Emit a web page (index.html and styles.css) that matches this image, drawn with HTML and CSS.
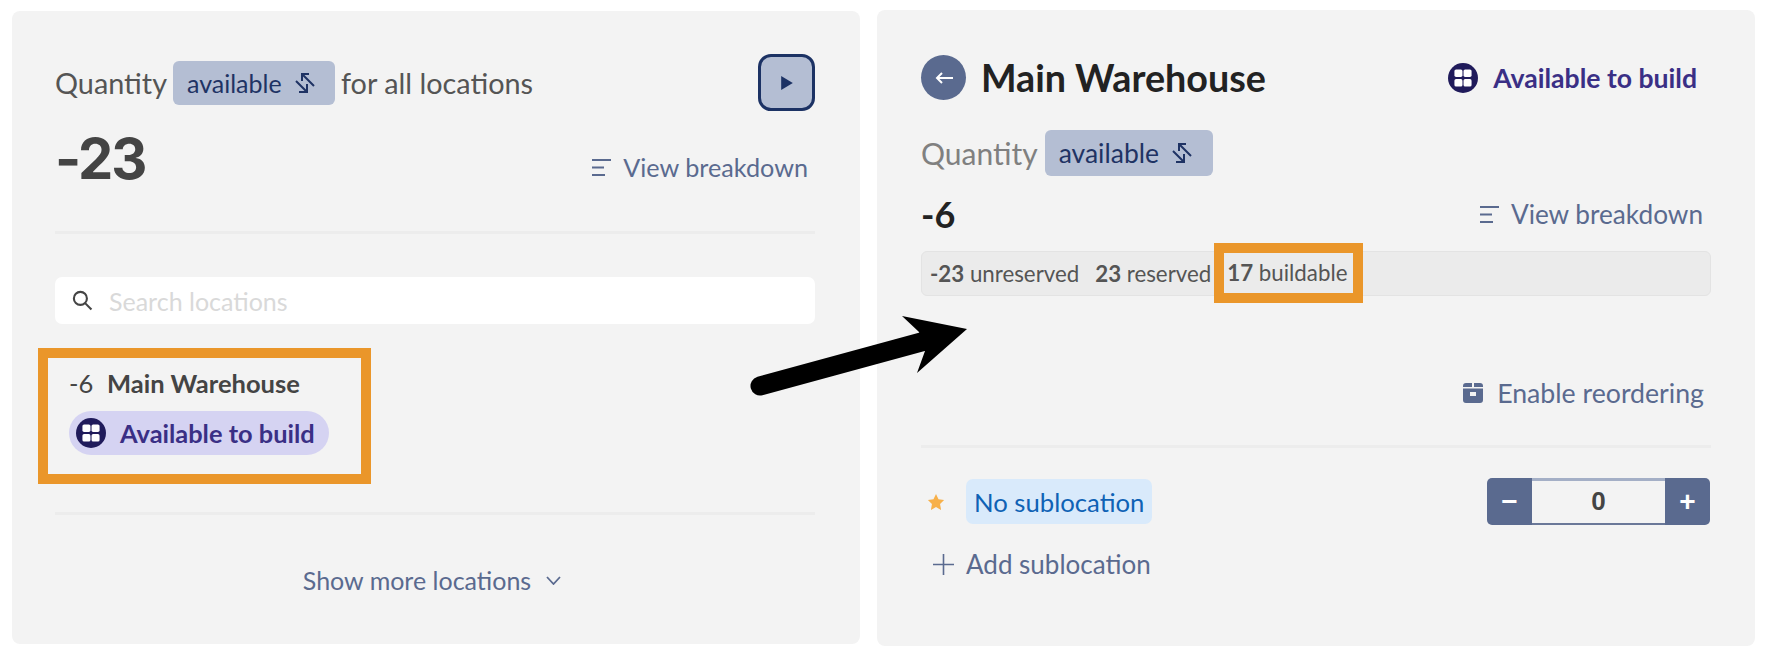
FILE: index.html
```html
<html><head>
  <title>Main Warehouse</title>
  <link rel="stylesheet" href="styles.css">
</head>
<body>
  <main class="page">
    <section class="panel panel-left">
      <div class="qty-head">
        <div class="qty-label">
          <span>Quantity</span>
          <span class="chip">available
            <svg class="swap" viewBox="0 0 22 20"><path d="M15 1 H8 V8 M8 1 L20 13 M5 19 H13 V11 M13 19 L2 8"/></svg>
          </span>
          <span>for all locations</span>
        </div>
        <button class="play"><svg viewBox="0 0 12 14"><path d="M1 1 L11 7 L1 13 Z"/></svg></button>
      </div>
      <div class="total-row">
        <div class="total">-23</div>
        <a class="link link-total"><svg class="bars" viewBox="0 0 19 17"><path d="M0 1 H19 M0 8.500 H12 M0 16 H13"/></svg>View breakdown</a>
      </div>
      <hr class="rule rule-first">
      <div class="search">
        <svg viewBox="0 0 20 20"><circle cx="8" cy="8" r="6.200"/><path d="M12.500 12.500 L18.500 18.500"/></svg>
        <span>Search locations</span>
      </div>
      <div class="location-box">
        <div class="location-name"><span class="location-qty">-6</span><b>Main Warehouse</b></div>
        <div class="pill">
          <svg class="build" viewBox="0 0 28 28"><circle cx="14" cy="14" r="14"/><rect x="6" y="6" width="7.500" height="7" rx="1.500"/><rect x="14.500" y="6" width="7.500" height="7" rx="1.500"/><rect x="6" y="15" width="7.500" height="7" rx="1.500"/><rect x="14.500" y="15" width="7.500" height="7" rx="1.500"/></svg>
          Available to build
        </div>
      </div>
      <hr class="rule rule-second">
      <a class="more">Show more locations
        <svg viewBox="0 0 15 9"><path d="M1 1 L7.500 8 L14 1"/></svg>
      </a>
    </section>

    <section class="panel panel-right">
      <div class="title-row">
        <div class="title">
          <span class="back"><svg viewBox="0 0 18 14"><path d="M18 7 H2 M7 2 L2 7 L7 12"/></svg></span>
          <h1>Main Warehouse</h1>
        </div>
        <div class="build-label">
          <svg class="build" viewBox="0 0 28 28"><circle cx="14" cy="14" r="14"/><rect x="6" y="6" width="7.500" height="7" rx="1.500"/><rect x="14.500" y="6" width="7.500" height="7" rx="1.500"/><rect x="6" y="15" width="7.500" height="7" rx="1.500"/><rect x="14.500" y="15" width="7.500" height="7" rx="1.500"/></svg>
          Available to build
        </div>
      </div>
      <div class="qty-label qty-label-muted">
        <span>Quantity</span>
        <span class="chip">available
          <svg class="swap" viewBox="0 0 22 20"><path d="M15 1 H8 V8 M8 1 L20 13 M5 19 H13 V11 M13 19 L2 8"/></svg>
        </span>
      </div>
      <div class="total-row total-row-small">
        <div class="total-small">-6</div>
        <a class="link"><svg class="bars" viewBox="0 0 19 17"><path d="M0 1 H19 M0 8.500 H12 M0 16 H13"/></svg>View breakdown</a>
      </div>
      <div class="breakdown">
        <span class="stat"><b>-23</b> unreserved</span>
        <span class="stat"><b>23</b> reserved</span>
        <span class="stat stat-hl"><span><b>17</b> buildable</span></span>
      </div>
      <div class="reorder-row">
        <a class="link link-reorder"><svg class="box" viewBox="0 0 20 20"><path d="M3 0 H9 V4 H0 V3 Q0 0 3 0 Z M11 0 H17 Q20 0 20 3 V4 H11 Z"/><path fill-rule="evenodd" d="M0 5.500 H20 V17 Q20 20 17 20 H3 Q0 20 0 17 Z M7 9 V13 H13 V9 Z"/></svg>Enable reordering</a>
      </div>
      <hr class="rule">
      <div class="sub-row">
        <div class="sub-name">
          <svg class="star" viewBox="0 0 20 20"><path d="M10 1 L12.800 7 L19 7.800 L14.500 12.200 L15.700 19 L10 15.600 L4.300 19 L5.500 12.200 L1 7.800 L7.200 7 Z"/></svg>
          <span class="sub-chip">No sublocation</span>
        </div>
        <div class="stepper">
          <span class="step step-minus">−</span>
          <span class="step-value">0</span>
          <span class="step step-plus">+</span>
        </div>
      </div>
      <a class="add-sub"><svg viewBox="0 0 21 21"><path d="M10.500 0 V21 M0 10.500 H21"/></svg>Add sublocation</a>
    </section>

    <svg class="arrow" viewBox="0 0 240 110"><path d="M20 86 L185 41"/><path class="arrow-head" d="M162 16 L227 29 L177 73 L185 51 L179 32 Z"/></svg>
  </main>
</body></html>
```
FILE: styles.css
```css
* {
  box-sizing: border-box;
}

body {
  margin: 0;
  background: #fff;
  font-family: "Lato", "Liberation Sans", sans-serif;
  color: #444;
}

.page {
  position: relative;
  display: flex;
  gap: 17px;
  width: 1772px;
  height: 656px;
  padding: 11px 17px 10px 12px;
}

.panel {
  background: #f3f3f3;
  border-radius: 8px;
}

.panel-left {
  width: 848px;
  height: 633px;
  padding: 43px 45px 0 43px;
}

.panel-right {
  width: 878px;
  height: 636px;
  margin-top: -1px;
  padding: 45px 44px 0 44px;
}

.qty-head {
  display: flex;
  justify-content: space-between;
}

.qty-label {
  display: flex;
  align-items: center;
  gap: 6px;
  height: 44px;
  margin-top: 7px;
  font-size: 28.800px;
  color: #555;
}

.chip {
  display: flex;
  align-items: center;
  gap: 12px;
  width: 162px;
  height: 44px;
  padding: 0 14px;
  background: #b4bed3;
  border-radius: 6px;
  color: #1f3364;
  font-size: 25px;
}

.swap {
  width: 22px;
  height: 20px;
  fill: none;
  stroke: #1f3364;
  stroke-width: 2;
}

.play {
  width: 57px;
  height: 57px;
  padding: 0;
  display: flex;
  align-items: center;
  justify-content: center;
  background: #b4bed3;
  border: 3px solid #1c3264;
  border-radius: 13px;
}

.play svg {
  width: 14px;
  height: 18px;
  fill: #1c3264;
}

.total-row {
  display: flex;
  justify-content: space-between;
  align-items: flex-end;
  padding-right: 7px;
  margin-top: 18px;
}

.total {
  font-family: "Inter", "Liberation Sans", sans-serif;
  font-size: 56px;
  font-weight: 700;
  letter-spacing: -2px;
  line-height: 60px;
  color: #444;
}

.link {
  display: flex;
  align-items: center;
  font-size: 26.200px;
  color: #5a6a8f;
  line-height: 30px;
}

.link-total {
  margin-bottom: 7px;
  font-size: 25.200px;
}

.link-reorder {
  font-size: 26.700px;
}

.bars {
  width: 19px;
  height: 17px;
  margin-right: 12px;
  fill: none;
  stroke: #5a6a8f;
  stroke-width: 2;
}

.rule {
  height: 3px;
  margin: 0;
  border: 0;
  background: #ececec;
}

.rule-first {
  margin-top: 42px;
}

.rule-second {
  margin-top: 28px;
}

.search {
  display: flex;
  align-items: center;
  gap: 16px;
  height: 47px;
  margin-top: 43px;
  padding-left: 17px;
  background: #fff;
  border-radius: 7px;
  font-size: 25px;
  color: #d9d9d9;
}

.search svg {
  width: 21px;
  height: 21px;
  fill: none;
  stroke: #444;
  stroke-width: 2;
}

.location-box {
  width: 333px;
  height: 136px;
  margin: 24px 0 0 -17px;
  padding: 10px 0 0 21px;
  border: 10px solid #ea962a;
}

.location-name {
  display: flex;
  gap: 15px;
  font-size: 25.500px;
  line-height: 30px;
  color: #444;
}

.location-qty {
  width: 23px;
}

.location-name b {
  font-weight: 700;
}

.pill {
  display: flex;
  align-items: center;
  gap: 14px;
  width: 260px;
  height: 44px;
  margin-top: 13px;
  padding-left: 7px;
  background: #d5d3f2;
  border-radius: 22px;
  font-size: 25.400px;
  font-weight: 700;
  color: #3a2f85;
}

.build {
  flex: none;
  width: 30px;
  height: 30px;
  fill: #201b5b;
}

.build rect {
  fill: #fff;
}

.more {
  display: flex;
  justify-content: center;
  align-items: center;
  gap: 15px;
  margin-top: 50px;
  padding-right: 6px;
  font-size: 25px;
  line-height: 30px;
  color: #5a6a8f;
}

.more svg {
  width: 15px;
  height: 9px;
  fill: none;
  stroke: #5a6a8f;
  stroke-width: 1.800;
}

.title-row {
  display: flex;
  justify-content: space-between;
  align-items: center;
  padding-right: 14px;
}

.title {
  display: flex;
  align-items: center;
  gap: 15px;
}

.back {
  display: flex;
  align-items: center;
  justify-content: center;
  width: 45px;
  height: 45px;
  border-radius: 50%;
  background: #5a6a8f;
}

.back svg {
  width: 18px;
  height: 14px;
  fill: none;
  stroke: #fff;
  stroke-width: 2;
}

h1 {
  margin: 0;
  font-size: 37.700px;
  font-weight: 700;
  color: #222;
}

.build-label {
  display: flex;
  align-items: center;
  gap: 15px;
  font-size: 26.600px;
  font-weight: 700;
  color: #3a2f85;
}

.qty-label-muted {
  gap: 7px;
  height: 46px;
  margin-top: 30px;
  font-size: 30px;
  color: #808080;
}

.qty-label-muted .chip {
  width: 168px;
  height: 46px;
  font-size: 26.500px;
}

.total-row-small {
  align-items: center;
  margin-top: 16px;
  padding-right: 8px;
}

.total-small {
  font-size: 36px;
  font-weight: 700;
  line-height: 44px;
  color: #222;
}

.breakdown {
  display: flex;
  align-items: center;
  gap: 16px;
  height: 45px;
  margin-top: 15px;
  padding-left: 8px;
  background: #ebebeb;
  border: 1px solid #e3e3e3;
  border-radius: 6px;
  font-size: 22.300px;
  color: #555;
}

.stat-hl {
  display: flex;
  align-items: center;
  flex: none;
  width: 149px;
  height: 60px;
  margin: -2px 0 0 -13px;
  padding-left: 3px;
  border: 10px solid #ea962a;
  white-space: nowrap;
}

.reorder-row {
  display: flex;
  justify-content: flex-end;
  margin-top: 82px;
  padding-right: 7px;
}

.box {
  width: 20px;
  height: 20px;
  margin-right: 14px;
  fill: #5a6a8f;
}

.reorder-row + .rule {
  margin-top: 37px;
}

.sub-row {
  display: flex;
  justify-content: space-between;
  align-items: center;
  margin-top: 30px;
  padding-left: 6px;
}

.sub-name {
  display: flex;
  align-items: center;
  gap: 21px;
}

.star {
  width: 18px;
  height: 18px;
  fill: #f7b04a;
}

.sub-chip {
  display: flex;
  align-items: center;
  height: 45px;
  padding: 0 8px;
  background: #d9eafb;
  border-radius: 7px;
  font-size: 25.700px;
  color: #0f62b5;
}

.stepper {
  display: flex;
  width: 223px;
  height: 47px;
  margin-right: 1px;
}

.step {
  display: flex;
  align-items: center;
  justify-content: center;
  width: 45px;
  background: #5a6a8f;
  color: #fff;
  font-family: "Liberation Sans", sans-serif;
  font-size: 28px;
  font-weight: 700;
}

.step-minus {
  border-radius: 5px 0 0 5px;
}

.step-plus {
  border-radius: 0 5px 5px 0;
}

.step-value {
  flex: 1;
  text-align: center;
  line-height: 41px;
  border-top: 3px solid #a4afc6;
  border-bottom: 2px solid #6a7898;
  font-family: "Liberation Sans", sans-serif;
  font-size: 26px;
  font-weight: 700;
  color: #444;
}

.add-sub {
  display: flex;
  align-items: center;
  gap: 12px;
  margin-top: 21px;
  padding-left: 12px;
  font-size: 26px;
  line-height: 36px;
  color: #5a6a8f;
}

.add-sub svg {
  width: 21px;
  height: 21px;
  fill: none;
  stroke: #5a6a8f;
  stroke-width: 1.600;
}

.arrow {
  position: absolute;
  left: 740px;
  top: 300px;
  width: 240px;
  height: 110px;
  fill: none;
  stroke: #000;
  stroke-width: 19;
  stroke-linecap: round;
}

.arrow-head {
  fill: #000;
  stroke: none;
}
```
